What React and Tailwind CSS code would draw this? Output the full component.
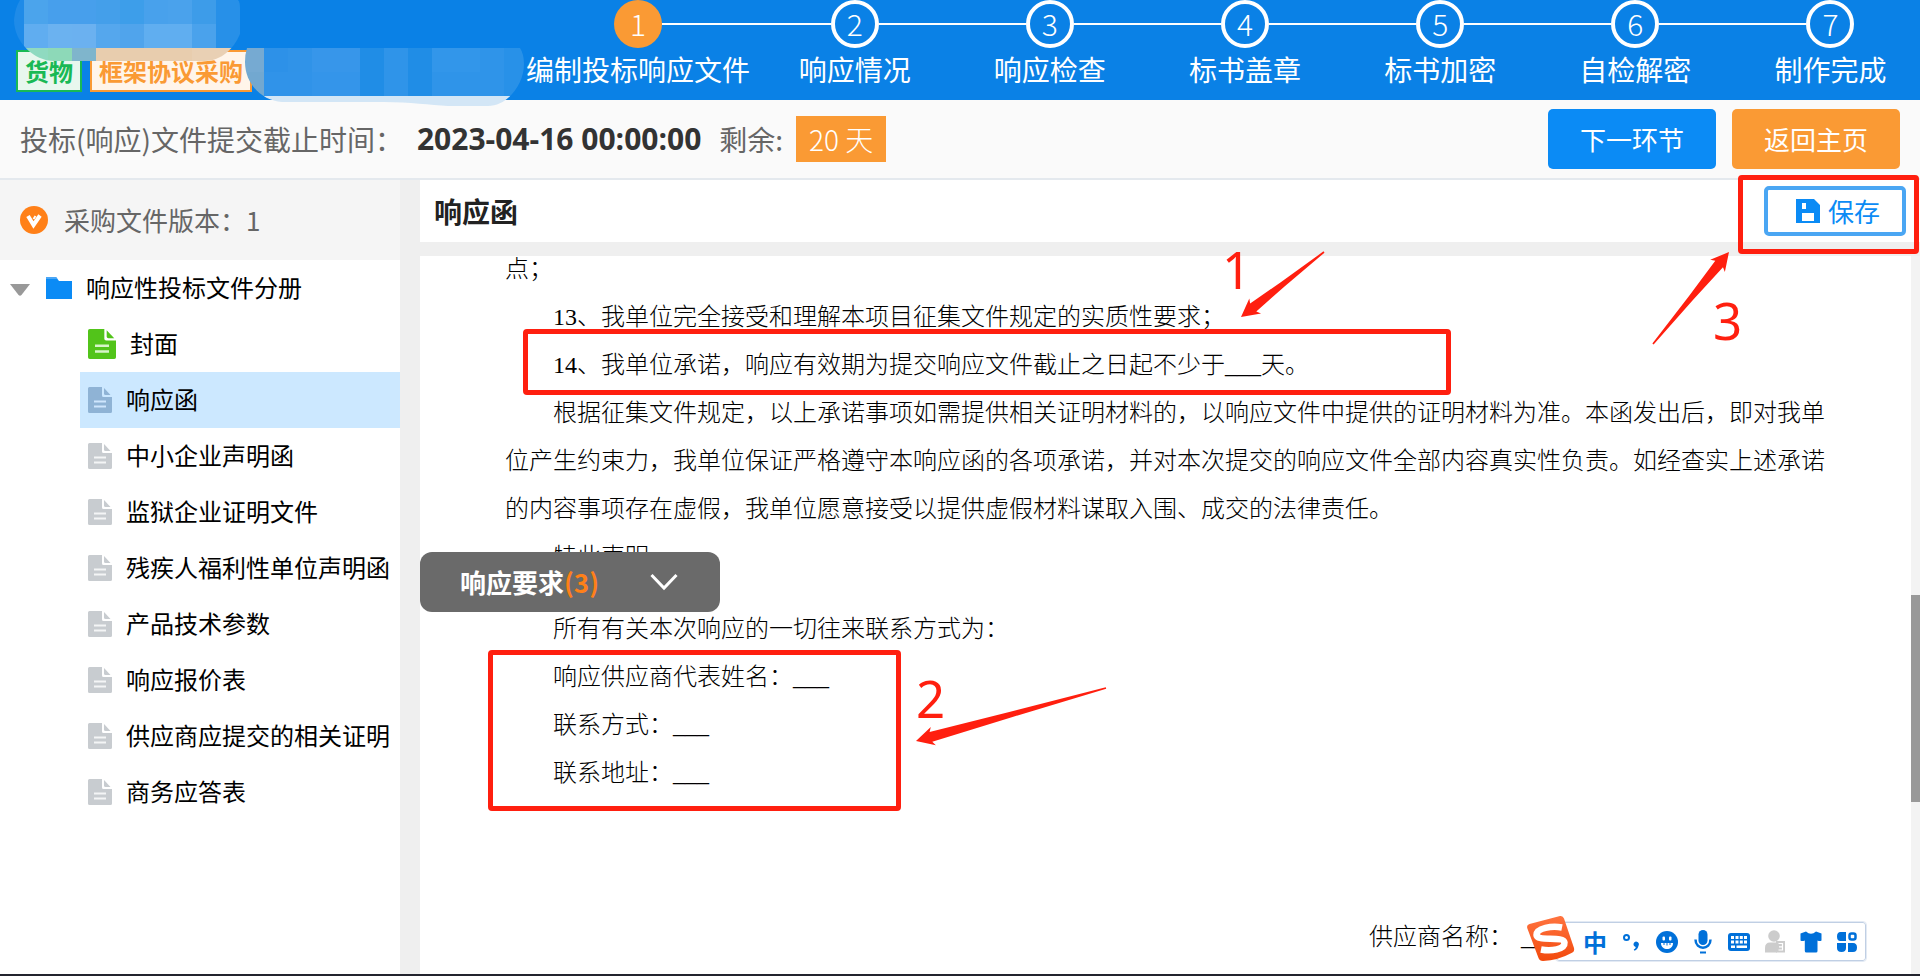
import React from "react";

const steps = [
  "编制投标响应文件",
  "响应情况",
  "响应检查",
  "标书盖章",
  "标书加密",
  "自检解密",
  "制作完成",
];

const files = [
  { name: "封面", state: "done" },
  { name: "响应函", state: "active" },
  { name: "中小企业声明函" },
  { name: "监狱企业证明文件" },
  { name: "残疾人福利性单位声明函" },
  { name: "产品技术参数" },
  { name: "响应报价表" },
  { name: "供应商应提交的相关证明" },
  { name: "商务应答表" },
];

const mosaicTop = [
  ["#1f8be8", "#4ba4ec", "#479fec", "#479fec", "#449fea", "#3d9eea", "#48a1ec", "#4aa2ec", "#3d9ce9", "#2790e8"],
  ["#1f8be8", "#60adf0", "#6bb2f0", "#6bb1f0", "#55a7ed", "#50a4ec", "#60aef0", "#60aef0", "#4aa2ec", "#2790e8"],
  ["#8fdac0", "#8fdac0", "#8dd9b8", "#7fb5cc", "#e8cdae", "#e8cdae", "#e8cdae", "#e8cdae", "#e9d0b4", "#e9d0b4"],
];

const mosaicBottom = [
  ["#76aad2", "#2d91e8", "#3093e8", "#3796ea", "#3796ea", "#208de6", "#2f94e9", "#208de6", "#3296ea", "#3296ea", "#2f94e9", "#2891e8"],
  ["#72a8d0", "#3093e9", "#3093e9", "#3495ea", "#3495ea", "#208de6", "#2f94e9", "#208de6", "#2f94e9", "#2f94e9", "#2f94e9", "#2891e8"],
  ["#d3e6f6", "#d3e6f6", "#d3e6f6", "#d3e6f6", "#d3e6f6", "#d3e6f6", "#d3e6f6", "#d3e6f6", "#d3e6f6", "#d3e6f6", "#d3e6f6", "#d3e6f6"],
];

function MosaicCells({ rows, x, y }) {
  return rows.map((row, r) =>
    row.map((color, c) => (
      <rect key={`${r}-${c}`} x={x + c * 24} y={y + r * 24} width="24" height="24" fill={color} shapeRendering="crispEdges" />
    ))
  );
}

function Mosaic() {
  return (
    <svg className="pointer-events-none absolute top-0 left-0 z-10" width="540" height="112" aria-hidden="true">
      <defs>
        <clipPath id="mosaicTop">
          <path d="M20 0H238Q240 2 240 8V34C234 48 222 61 204 61H54C34 61 14 42 14 20Q15 8 20 0Z" />
        </clipPath>
        <clipPath id="mosaicBottom">
          <path d="M247 48H520Q524 54 524 64C524 84 508 106 488 106H448C430 105 410 102 384 102H282C262 101 245 84 245 62Q245 54 247 48Z" />
        </clipPath>
      </defs>
      <g clipPath="url(#mosaicTop)">
        <MosaicCells rows={mosaicTop} x={0} y={0} />
      </g>
      <g clipPath="url(#mosaicBottom)">
        <MosaicCells rows={mosaicBottom} x={240} y={48} />
      </g>
    </svg>
  );
}

function FileIcon({ state }) {
  const fill = state === "done" ? "#52c41a" : state === "active" ? "#8fb3d5" : "#c8ccd0";
  const line = state === "done" ? "#d6f5c8" : state === "active" ? "#cfe6fd" : "#f4f5f6";
  return (
    <svg
      className={state === "done" ? "h-[30px] w-[28px] shrink-0" : "h-[26px] w-[24px] shrink-0"}
      viewBox="0 0 24 26"
      preserveAspectRatio="none"
      aria-hidden="true"
    >
      <path d="M1.5 0H14V8.5Q14 10 15.500 10H24V24.500Q24 26 22.500 26H1.500Q0 26 0 24.500V1.500Q0 0 1.500 0Z" fill={fill} />
      <path d="M16 1L22.500 8H17.500Q16 8 16 6.500Z" fill={fill} />
      <path d="M6 14.500H18M6 19.500H18" stroke={line} strokeWidth="2" />
    </svg>
  );
}

function Arrow({ from, to }) {
  const dx = from[0] - to[0];
  const dy = from[1] - to[1];
  const len = Math.hypot(dx, dy);
  const ux = dx / len;
  const uy = dy / len;
  const at = (d, w) => `${to[0] + ux * d - uy * w},${to[1] + uy * d + ux * w}`;
  const points = [at(0, 0), at(18, 9.5), at(15.5, 5), at(len * 0.5, 2.8), at(len, 0.8), at(len, -0.8), at(len * 0.5, -2.8), at(15.5, -5), at(18, -9.5)];
  return <polygon points={points.join(" ")} fill="#ff1f0f" />;
}

function Annotations() {
  return (
    <div className="pointer-events-none absolute inset-0 z-20 overflow-hidden font-['Noto_Sans','Noto_Sans_CJK_SC',sans-serif] text-[51px] leading-[52px] text-[#ff1f0f]">
      <div className="absolute top-[329px] left-[523px] h-[66px] w-[928px] rounded-[4px] border-[5px] border-[#ff1f0f]" />
      <div className="absolute top-[650px] left-[488px] h-[161px] w-[413px] rounded-[4px] border-[5px] border-[#ff1f0f]" />
      <div className="absolute top-[175px] right-[1px] h-[79px] w-[181px] rounded-[4px] border-[5px] border-[#ff1f0f]" />
      <svg className="absolute top-0 left-0" width="1920" height="976" aria-hidden="true">
        <Arrow from={[1324, 252]} to={[1241, 317]} />
        <Arrow from={[1106, 688]} to={[916, 741]} />
        <Arrow from={[1653, 344]} to={[1729, 252]} />
      </svg>
      <span className="absolute top-[243px] left-[1222px]">1</span>
      <span className="absolute top-[672px] left-[916px]">2</span>
      <span className="absolute top-[294px] left-[1713px]">3</span>
    </div>
  );
}

function ImeButton({ label, children }) {
  return (
    <button type="button" aria-label={label} className="flex h-9 w-9 items-center justify-center text-[#0070d9]">
      {children}
    </button>
  );
}

function ImeBar() {
  return (
    <div className="absolute top-[915px] left-[1526px] z-10 flex items-start">
      <svg className="relative z-10 h-[48px] w-[50px]" viewBox="0 0 50 48" aria-hidden="true">
        <defs>
          <linearGradient id="imeLogo" x1="0" y1="0" x2="0" y2="1">
            <stop offset="0" stopColor="#ff7440" />
            <stop offset="1" stopColor="#f2490c" />
          </linearGradient>
        </defs>
        <path d="M3.500 9L34 1Q37 .5 38 3.500L48 33Q48.800 36.500 46 37.800Q32 45.500 17 46Q13.500 46 12.500 43L1.200 13Q.5 10 3.500 9Z" fill="url(#imeLogo)" />
        <path
          d="M36 12.500C26 10.500 10.500 13 10.500 20C10.500 27 37.500 20.500 38.500 27.500C39 34.500 25 36.500 15 34.500"
          fill="none"
          stroke="#fff"
          strokeWidth="6.500"
        />
      </svg>
      <div className="mt-[7px] -ml-5 flex h-[39px] items-center rounded-[3px] border border-[#c0cfe4] bg-white pl-5 outline outline-[#e3eaf4]">
        <ImeButton label="中文输入">
          <span className="font-['Noto_Sans_CJK_SC',sans-serif] text-[24px] leading-6 font-bold">中</span>
        </ImeButton>
        <ImeButton label="标点符号">
          <svg width="18" height="20" viewBox="0 0 18 20" aria-hidden="true">
            <circle cx="4.500" cy="5.500" r="2.500" fill="none" stroke="currentColor" strokeWidth="2" />
            <path d="M11.500 12.500a2.700 2.700 0 1 1 5 1.200c-.5 2.500-2 4.300-4 5l-.8-1.200c1.300-.8 2-1.500 2-2.600c-1.200-.2-2.200-1.200-2.200-2.400Z" fill="currentColor" />
          </svg>
        </ImeButton>
        <ImeButton label="表情">
          <svg width="22" height="22" viewBox="0 0 22 22" aria-hidden="true">
            <circle cx="11" cy="11" r="11" fill="currentColor" />
            <rect x="6.500" y="5.500" width="2.500" height="4" rx="1" fill="#fff" />
            <rect x="13" y="5.500" width="2.500" height="4" rx="1" fill="#fff" />
            <path d="M5 12H17C17 16 14 18 11 18S5 16 5 12Z" fill="#fff" />
            <path d="M11 12V14.500M8 12V14M14 12V14" stroke="currentColor" strokeWidth="1" />
          </svg>
        </ImeButton>
        <ImeButton label="语音">
          <svg width="18" height="24" viewBox="0 0 18 24" aria-hidden="true">
            <rect x="4.500" y="0" width="9" height="15" rx="4.500" fill="currentColor" />
            <path d="M1.500 9.500C1.500 20.500 16.500 20.500 16.500 9.500" fill="none" stroke="currentColor" strokeWidth="2.500" />
            <path d="M6 22.500H12" stroke="currentColor" strokeWidth="2" />
          </svg>
        </ImeButton>
        <ImeButton label="软键盘">
          <svg width="22" height="18" viewBox="0 0 22 18" aria-hidden="true">
            <rect width="22" height="18" rx="3" fill="currentColor" />
            <path d="M3 3h3v3h-3zM7.500 3h3v3h-3zM11.800 3h3v3h-3zM16 3h3v3h-3zM3 7.500h3v3h-3zM7.500 7.500h3v3h-3zM11.800 7.500h3v3h-3zM16 7.500h3v3h-3zM3 12.500h4v2.500h-4zM8.500 12.500h10.500v2.500h-10.500z" fill="#fff" />
          </svg>
        </ImeButton>
        <ImeButton label="账号">
          <svg width="20" height="23" viewBox="0 0 20 23" aria-hidden="true">
            <circle cx="9" cy="6" r="5.800" fill="#ccc" />
            <path d="M0 22.500V18Q0 12.500 5 12.500H12V22.500Z" fill="#ccc" />
            <path d="M11 11h9v11.500h-9z" fill="#ccc" />
            <path d="M13.500 13.500h4v6.500h-4M14 16.800h3.500" fill="none" stroke="#fff" strokeWidth="1.200" />
          </svg>
        </ImeButton>
        <ImeButton label="皮肤">
          <svg width="22" height="22" viewBox="0 0 22 22" aria-hidden="true">
            <path d="M6 .5Q11 5 16 .5L21.500 2.500V9.500Q20 10.500 17.500 9.500V20Q17.500 21.500 16 21.500H6.500Q4.800 21.500 4.800 20V9.500Q2 10.500 .5 9.500V2.500Z" fill="currentColor" />
          </svg>
        </ImeButton>
        <ImeButton label="工具箱">
          <svg width="20" height="20" viewBox="0 0 20 20" aria-hidden="true">
            <path d="M3.500 0H9V9H3.500Q0 9 0 4.500Q0 0 3.500 0ZM0 11H9V16Q9 20 4.500 20Q0 20 0 16ZM11 11H16Q20 11 20 15.500Q20 20 16 20H11Z" fill="currentColor" />
            <rect x="12.500" y="1.500" width="6" height="6" rx="2" fill="none" stroke="currentColor" strokeWidth="2.500" />
          </svg>
        </ImeButton>
      </div>
    </div>
  );
}

export default function App() {
  return (
    <div className="relative flex h-screen flex-col overflow-hidden bg-[#efefef] font-['Noto_Sans_CJK_SC',sans-serif] text-[#666]">
      <header className="relative flex h-[100px] shrink-0 bg-[#0a81e6]">
        <Mosaic />
        <div className="flex w-[519px] shrink-0 items-start gap-2 pt-[50px] pl-4 text-[24px] leading-[38px] font-bold">
          <span className="border-2 border-[#19b955] bg-[#e8f7ee] px-[7px] text-[#19b955]">货物</span>
          <span className="border-2 border-[#fa9a34] bg-[#fff5ea] px-[7px] text-[#fa9a34]">框架协议采购</span>
        </div>
        <ol className="-mr-2 grid flex-1 grid-cols-[238fr_195fr_195fr_195fr_195fr_195fr_195fr] text-white">
          {steps.map((name, i) => (
            <li key={name} className="flex flex-col items-center">
              <span className="flex w-full items-center">
                <span className={i === 0 ? "h-[2px] flex-1" : "h-[2px] flex-1 bg-white"} />
                <span
                  className={
                    i === 0
                      ? "flex h-12 w-12 items-center justify-center rounded-full bg-[#fa9a34] pb-[2px] text-[30px] leading-8 font-light"
                      : "flex h-12 w-12 items-center justify-center rounded-full border-4 border-white pb-[2px] text-[30px] leading-8 font-light"
                  }
                >
                  {i + 1}
                </span>
                <span className={i === 6 ? "h-[2px] flex-1" : "h-[2px] flex-1 bg-white"} />
              </span>
              <span className="text-[28px] leading-[42px] whitespace-nowrap">{name}</span>
            </li>
          ))}
        </ol>
      </header>

      <section className="flex h-20 shrink-0 items-center border-b-2 border-[#e4e9ee] bg-[#fafafa] px-5 text-[28px] leading-[46px]">
        <span>投标(响应)文件提交截止时间：</span>
        <time className="ml-[14px] font-['Open_Sans','Noto_Sans_CJK_SC',sans-serif] text-[30px] font-bold text-[#333]">2023-04-16 00:00:00</time>
        <span className="ml-[18px]">剩余:</span>
        <span className="ml-[13px] bg-[#fa9a34] px-[13px] font-light text-white">20 天</span>
        <div className="ml-auto flex gap-4 text-[26px] text-white">
          <button type="button" className="h-[60px] w-[168px] rounded-[5px] bg-[#0b8bf5]">下一环节</button>
          <button type="button" className="h-[60px] w-[168px] rounded-[5px] bg-[#fa9a34]">返回主页</button>
        </div>
      </section>

      <div className="flex min-h-0 flex-1 gap-5">
        <aside className="flex w-[400px] shrink-0 flex-col bg-white text-black">
          <div className="flex h-20 shrink-0 items-center gap-4 bg-[#f5f5f5] pl-5 text-[26px] text-[#666]">
            <svg width="28" height="28" viewBox="0 0 28 28" aria-hidden="true">
              <circle cx="14" cy="14" r="14" fill="#ff8018" />
              <path d="M8 10L13.500 19L20 9.500" fill="none" stroke="#fff" strokeWidth="4" />
              <path d="M13.500 13L15.500 10" stroke="#fff" strokeWidth="2" />
            </svg>
            <span className="pb-[2px]">采购文件版本：1</span>
          </div>
          <nav className="text-[24px] leading-[36px]">
            <button type="button" className="flex h-14 w-full items-center pl-[10px] text-left">
              <svg className="mt-1" width="20" height="12" viewBox="0 0 20 12" aria-hidden="true">
                <path d="M0 0H20L11.500 11Q10 12.500 8.500 11Z" fill="#999" />
              </svg>
              <svg className="mr-[14px] ml-4" width="26" height="22" viewBox="0 0 26 22" aria-hidden="true">
                <path d="M0 0H10L13 4H26V22H0Z" fill="#0b8bf5" />
                <path d="M0 0H10L11.500 2H0Z" fill="#4ba6f5" />
              </svg>
              <span className="pb-[2px]">响应性投标文件分册</span>
            </button>
            <ul className="pl-20">
              {files.map((f) => (
                <li key={f.name}>
                  <button
                    type="button"
                    className={
                      f.state === "active"
                        ? "flex h-14 w-full items-center gap-[14px] bg-[#cce8ff] pl-2 text-left whitespace-nowrap"
                        : "flex h-14 w-full items-center gap-[14px] pl-2 text-left whitespace-nowrap"
                    }
                  >
                    <FileIcon state={f.state} />
                    <span className="pb-[2px]">{f.name}</span>
                  </button>
                </li>
              ))}
            </ul>
          </nav>
        </aside>

        <main className="flex min-w-0 flex-1 flex-col">
          <div className="flex h-[62px] shrink-0 items-center justify-between bg-white pr-[14px] pl-[14px]">
            <h1 className="text-[28px] leading-[40px] font-bold text-[#222]">响应函</h1>
            <button
              type="button"
              className="flex h-[50px] w-[142px] items-center justify-center gap-2 rounded-[5px] border-4 border-[#4aa6f3] bg-white pl-[6px] text-[26px] text-[#0b8bf5]"
            >
              <svg width="24" height="24" viewBox="0 0 24 24" aria-hidden="true">
                <path fillRule="evenodd" d="M0 0H18L24 6V24H0ZM6 4V10H10V4ZM6 14V22H18V14Z" fill="currentColor" />
              </svg>
              <span className="pb-[2px]">保存</span>
            </button>
          </div>

          <div className="mt-[14px] flex min-h-0 flex-1 bg-white">
            <article className="min-w-0 flex-1 overflow-hidden pr-[84px] pl-[85px] font-['Liberation_Serif','Noto_Sans_CJK_SC',serif] text-[24px] leading-[48px] font-light text-black">
              <div className="-mt-[11px]">
                <p>点；</p>
                <p className="indent-12">13、我单位完全接受和理解本项目征集文件规定的实质性要求；</p>
                <p className="indent-12">14、我单位承诺，响应有效期为提交响应文件截止之日起不少于___天。</p>
                <p className="indent-12">
                  根据征集文件规定，以上承诺事项如需提供相关证明材料的，以响应文件中提供的证明材料为准。本函发出后，即对我单位产生约束力，我单位保证严格遵守本响应函的各项承诺，并对本次提交的响应文件全部内容真实性负责。如经查实上述承诺的内容事项存在虚假，我单位愿意接受以提供虚假材料谋取入围、成交的法律责任。
                </p>
                <p className="indent-12">特此声明</p>
                <div className="mt-6 indent-12">
                  <p>所有有关本次响应的一切往来联系方式为：</p>
                  <p>响应供应商代表姓名：___</p>
                  <p>联系方式：___</p>
                  <p>联系地址：___</p>
                </div>
                <p className="mt-[116px] flex justify-end gap-2 pr-[270px]">
                  <span>供应商名称：</span>
                  <span>___</span>
                </p>
              </div>
            </article>
            <div className="w-[9px] shrink-0 bg-[#f3f3f3] pt-[339px]">
              <div className="h-[207px] bg-[#999]" />
            </div>
          </div>
        </main>
      </div>

      <div className="h-[2px] shrink-0 bg-[#23242e]" />

      <button
        type="button"
        className="absolute top-[552px] left-[420px] z-10 flex h-[60px] w-[300px] items-center rounded-[12px] bg-[#6a6a6a] pr-[42px] pl-10 text-[26px] font-bold text-white"
      >
        <span className="pb-[2px]">
          响应要求<span className="text-[#ff8018]">(3)</span>
        </span>
        <svg className="ml-auto" width="28" height="18" viewBox="0 0 28 18" aria-hidden="true">
          <path d="M1.500 2L14 15L26.500 2" fill="none" stroke="#fff" strokeWidth="3" />
        </svg>
      </button>

      <ImeBar />
      <Annotations />
    </div>
  );
}
